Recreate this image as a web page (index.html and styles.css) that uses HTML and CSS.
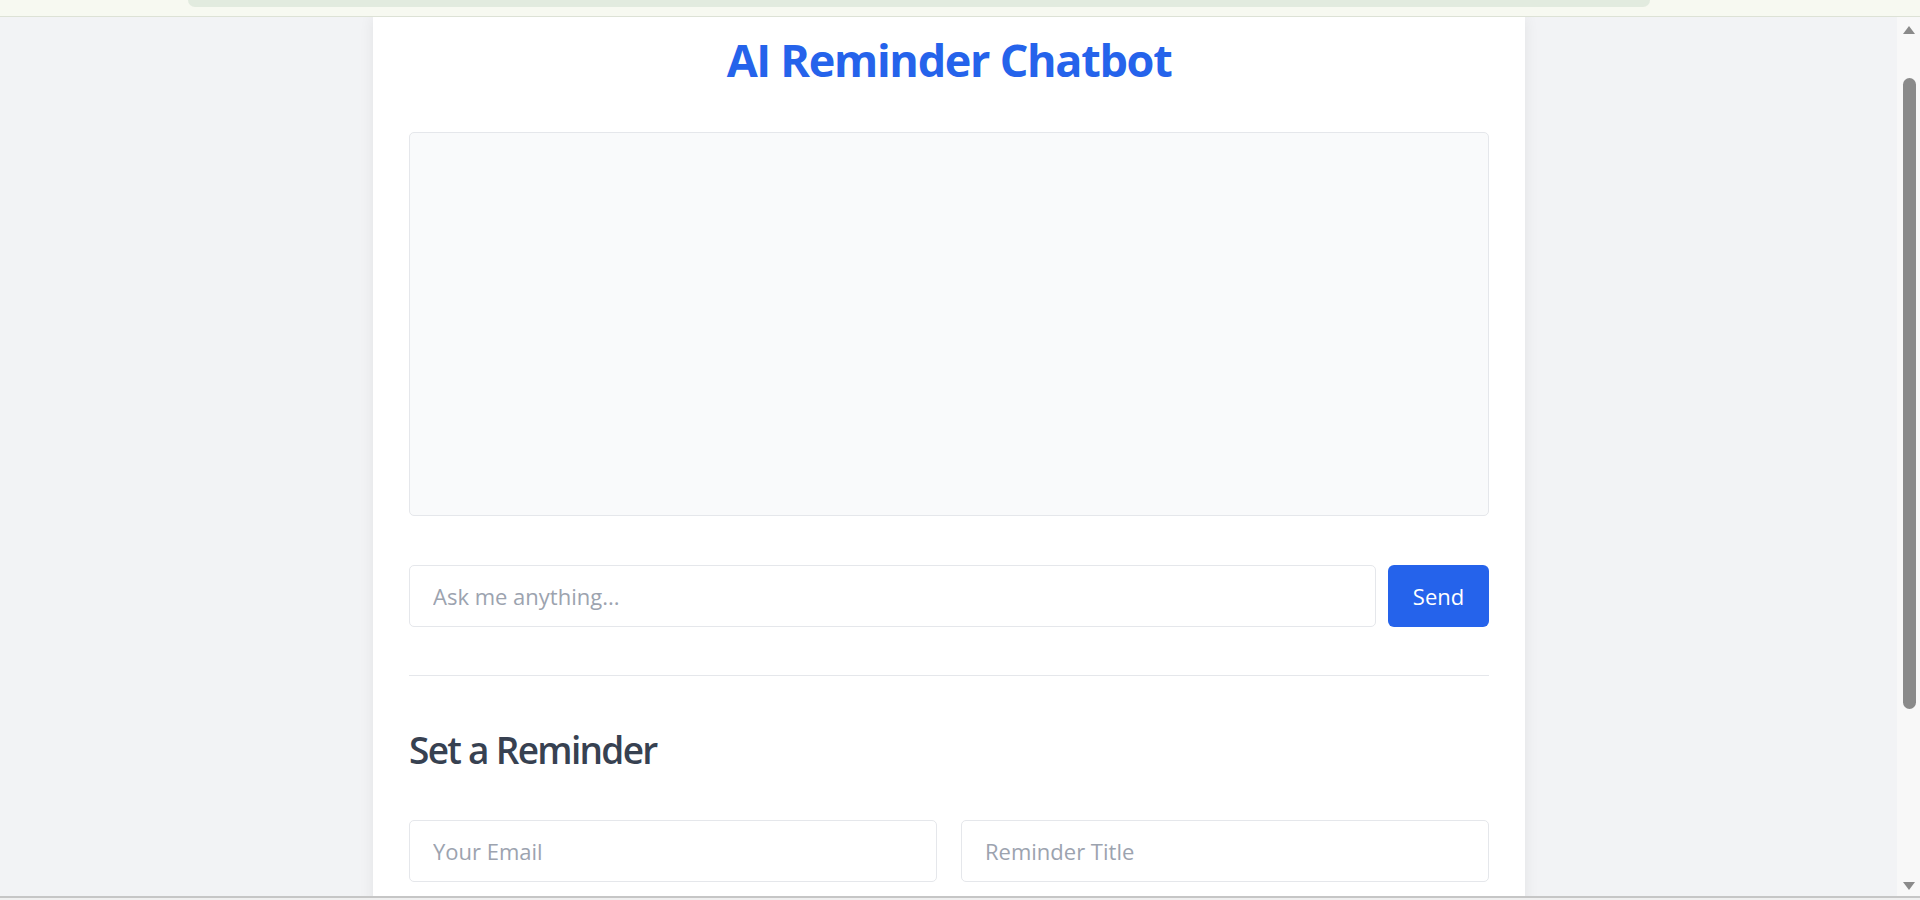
FILE: index.html
```html
<!DOCTYPE html>
<html lang="en">
<head>
<meta charset="utf-8">
<title>AI Reminder Chatbot</title>
<link rel="stylesheet" href="styles.css">
</head>
<body>
<div class="topbar"><div class="pill"></div></div>
<div class="middle">
  <div class="page">
    <div class="card">
      <h1 class="title">AI Reminder Chatbot</h1>
      <div class="chatbox"></div>
      <div class="ask-row">
        <input class="field ask" type="text" placeholder="Ask me anything...">
        <button class="send">Send</button>
      </div>
      <hr class="divider">
      <h2 class="subtitle">Set a Reminder</h2>
      <div class="reminder-grid">
        <input class="field" type="email" placeholder="Your Email">
        <input class="field" type="text" placeholder="Reminder Title">
      </div>
      <div class="reminder-grid more">
        <input class="field" type="text" placeholder="">
        <input class="field" type="text" placeholder="">
      </div>
    </div>
  </div>
  <div class="scrollbar">
    <div class="arrow up"></div>
    <div class="track"><div class="thumb"></div></div>
    <div class="arrow down"></div>
  </div>
</div>
<div class="bottombar"></div>
</body>
</html>
```

FILE: styles.css
```css
* { box-sizing: border-box; }
html, body { margin: 0; padding: 0; height: 900px; overflow: hidden; }
body {
  font-family: "Open Sans", "Noto Sans", "Liberation Sans", sans-serif;
  background: #f3f4f6;
  display: flex;
  flex-direction: column;
}
.topbar {
  height: 17px;
  flex: none;
  background: #f7f9f1;
  border-bottom: 1px solid #dde2d6;
  display: flex;
  justify-content: flex-start;
  padding-left: 188px;
}
.pill {
  width: 1462px;
  height: 7px;
  background: #e2ebdf;
  border-radius: 0 0 14px 14px;
}
.middle {
  height: 879px;
  flex: none;
  display: flex;
}
.page {
  flex: 1;
  overflow: hidden;
  background: #f2f3f5;
  padding-left: 1px;
}
.card {
  width: 1152px;
  margin: 0 auto;
  background: #ffffff;
  padding: 18px 36px 60px;
  box-shadow: 0 0 14px rgba(0, 0, 0, 0.07);
  min-height: 1000px;
}
.title {
  margin: 0 0 47px;
  font-size: 45px;
  line-height: 50px;
  font-weight: 700;
  color: #2563eb;
  text-align: center;
  letter-spacing: -1.3px;
}
.chatbox {
  height: 384px;
  background: #f9fafb;
  border: 1px solid #e5e7eb;
  border-radius: 5px;
}
.ask-row {
  margin-top: 49px;
  display: flex;
  gap: 12px;
}
.field {
  height: 62px;
  border: 1px solid #e5e7eb;
  border-radius: 5px;
  padding: 0 23px;
  font-family: inherit;
  font-size: 22px;
  color: #111827;
  background: #ffffff;
  outline: none;
  min-width: 0;
}
.field::placeholder { color: #9ca3af; }
.ask { flex: 1; }
.send {
  width: 101px;
  height: 62px;
  flex: none;
  border: none;
  border-radius: 6px;
  background: #2563eb;
  color: #ffffff;
  font-family: inherit;
  font-size: 22px;
  padding: 0;
}
.divider {
  margin: 48px 0 0;
  border: none;
  border-top: 1px solid #e5e7eb;
  height: 0;
}
.subtitle {
  margin: 51px 0 48px;
  font-size: 37px;
  line-height: 45px;
  font-weight: 600;
  color: #374151;
  letter-spacing: -1.7px;
}
.reminder-grid {
  display: grid;
  grid-template-columns: 1fr 1fr;
  gap: 24px;
}
.reminder-grid.more { margin-top: 24px; }
.scrollbar {
  width: 23px;
  flex: none;
  background: #f8f8f8;
  display: flex;
  flex-direction: column;
  align-items: center;
  padding: 8px 0 6px;
}
.arrow {
  width: 0;
  height: 0;
  border-left: 6px solid transparent;
  border-right: 6px solid transparent;
  flex: none;
}
.arrow.up { border-bottom: 8px solid #8a8a8a; margin-top: 1px; }
.arrow.down { border-top: 8px solid #8a8a8a; }
.track {
  flex: 1;
  width: 100%;
  display: flex;
  justify-content: center;
  padding-top: 44px;
}
.thumb {
  width: 13px;
  height: 631px;
  background: #8a8a8a;
  border-radius: 7px;
  margin-left: 2px;
}
.bottombar {
  height: 4px;
  flex: none;
  background: #f0f0f0;
  border-top: 2px solid #c6c6c6;
}
```
